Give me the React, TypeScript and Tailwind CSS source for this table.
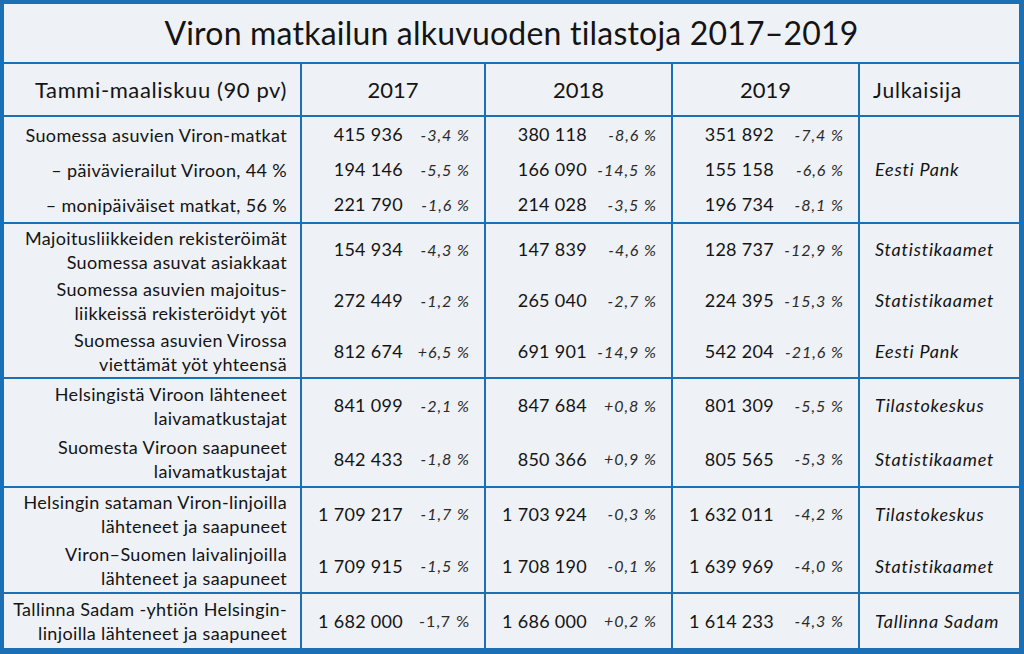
import React from 'react';

type Row = {
  label: string[];
  values: [string, string][];
  pub?: string;
  upright?: number; // column whose percentage is not set in italics
};

type Group = {
  height: number;
  rows: Row[];
  pub?: string; // one publisher for the whole group
};

const groups: Group[] = [
  {
    height: 105,
    pub: 'Eesti Pank',
    rows: [
      { label: ['Suomessa asuvien Viron-matkat'], values: [['415 936', '-3,4 %'], ['380 118', '-8,6 %'], ['351 892', '-7,4 %']] },
      { label: ['– päivävierailut Viroon, 44 %'], values: [['194 146', '-5,5 %'], ['166 090', '-14,5 %'], ['155 158', '-6,6 %']] },
      { label: ['– monipäiväiset matkat, 56 %'], values: [['221 790', '-1,6 %'], ['214 028', '-3,5 %'], ['196 734', '-8,1 %']] },
    ],
  },
  {
    height: 153,
    rows: [
      { label: ['Majoitusliikkeiden rekisteröimät', 'Suomessa asuvat asiakkaat'], values: [['154 934', '-4,3 %'], ['147 839', '-4,6 %'], ['128 737', '-12,9 %']], pub: 'Statistikaamet' },
      { label: ['Suomessa asuvien majoitus-', 'liikkeissä rekisteröidyt yöt'], values: [['272 449', '-1,2 %'], ['265 040', '-2,7 %'], ['224 395', '-15,3 %']], pub: 'Statistikaamet' },
      { label: ['Suomessa asuvien Virossa', 'viettämät yöt yhteensä'], values: [['812 674', '+6,5 %'], ['691 901', '-14,9 %'], ['542 204', '-21,6 %']], pub: 'Eesti Pank' },
    ],
  },
  {
    height: 107,
    rows: [
      { label: ['Helsingistä Viroon lähteneet', 'laivamatkustajat'], values: [['841 099', '-2,1 %'], ['847 684', '+0,8 %'], ['801 309', '-5,5 %']], pub: 'Tilastokeskus' },
      { label: ['Suomesta Viroon saapuneet', 'laivamatkustajat'], values: [['842 433', '-1,8 %'], ['850 366', '+0,9 %'], ['805 565', '-5,3 %']], pub: 'Statistikaamet' },
    ],
  },
  {
    height: 104,
    rows: [
      { label: ['Helsingin sataman Viron-linjoilla', 'lähteneet ja saapuneet'], values: [['1 709 217', '-1,7 %'], ['1 703 924', '-0,3 %'], ['1 632 011', '-4,2 %']], pub: 'Tilastokeskus' },
      { label: ['Viron–Suomen laivalinjoilla', 'lähteneet ja saapuneet'], values: [['1 709 915', '-1,5 %'], ['1 708 190', '-0,1 %'], ['1 639 969', '-4,0 %']], pub: 'Statistikaamet' },
    ],
  },
  {
    height: 54,
    rows: [
      { label: ['Tallinna Sadam -yhtiön Helsingin-', 'linjoilla lähteneet ja saapuneet'], values: [['1 682 000', '-1,7 %'], ['1 686 000', '+0,2 %'], ['1 614 233', '-4,3 %']], pub: 'Tallinna Sadam', upright: 0 },
    ],
  },
];

const cols = 'grid grid-cols-[296px_182px_185px_185px_1fr] gap-x-[2px]';
const cell = 'bg-[#eef1f5]';

export default function App() {
  return (
    <div
      className="w-[1024px] h-[654px] bg-[#1b6fb4] pt-[4px] pl-[4px] pr-[5px] pb-[6px] text-[#141414]"
      style={{ fontFamily: 'Lato, "Noto Sans", sans-serif' }}
    >
      <div className="flex flex-col gap-[2px] h-full">
        <div className={`${cell} h-[58px] flex items-center justify-center text-[32px] tracking-[0.2px]`}>
          Viron matkailun alkuvuoden tilastoja 2017–2019
        </div>

        <div className={`${cols} h-[51px]`}>
          <div className={`${cell} flex items-center justify-end pr-[13px] text-[22px] tracking-[0.6px]`}>Tammi-maaliskuu (90 pv)</div>
          <div className={`${cell} flex items-center justify-center text-[22px]`}>2017</div>
          <div className={`${cell} flex items-center justify-center text-[22px]`}>2018</div>
          <div className={`${cell} flex items-center justify-center text-[22px]`}>2019</div>
          <div className={`${cell} flex items-center pl-[13px] text-[21px] tracking-[0.8px]`}>Julkaisija</div>
        </div>

        {groups.map((g, gi) => (
          <div key={gi} className={cols} style={{ height: g.height }}>
            <div className={`${cell} flex flex-col`}>
              {g.rows.map((r, ri) => (
                <div key={ri} className="flex-1 flex flex-col justify-center items-end pr-[13px] text-[18px] leading-[24px] tracking-[0.35px]">
                  {r.label.map((l, li) => (
                    <div key={li}>{l}</div>
                  ))}
                </div>
              ))}
            </div>
            {[0, 1, 2].map((ci) => (
              <div key={ci} className={`${cell} flex flex-col`}>
                {g.rows.map((r, ri) => (
                  <div key={ri} className="flex-1 grid grid-cols-[101px_1fr] items-center">
                    <span className="text-right text-[18px] tracking-[0.3px]">{r.values[ci][0]}</span>
                    <span
                      className={`text-right text-[16px] tracking-[1px] pr-[14px] text-[#2a2a2a] ${r.upright === ci ? '' : 'italic'}`}
                    >
                      {r.values[ci][1]}
                    </span>
                  </div>
                ))}
              </div>
            ))}
            <div className={`${cell} flex flex-col`}>
              {g.pub ? (
                <div className="flex-1 flex items-center pl-[15px] italic text-[18px] tracking-[0.8px]">{g.pub}</div>
              ) : (
                g.rows.map((r, ri) => (
                  <div key={ri} className="flex-1 flex items-center pl-[15px] italic text-[18px] tracking-[0.8px]">
                    {r.pub}
                  </div>
                ))
              )}
            </div>
          </div>
        ))}
      </div>
    </div>
  );
}
